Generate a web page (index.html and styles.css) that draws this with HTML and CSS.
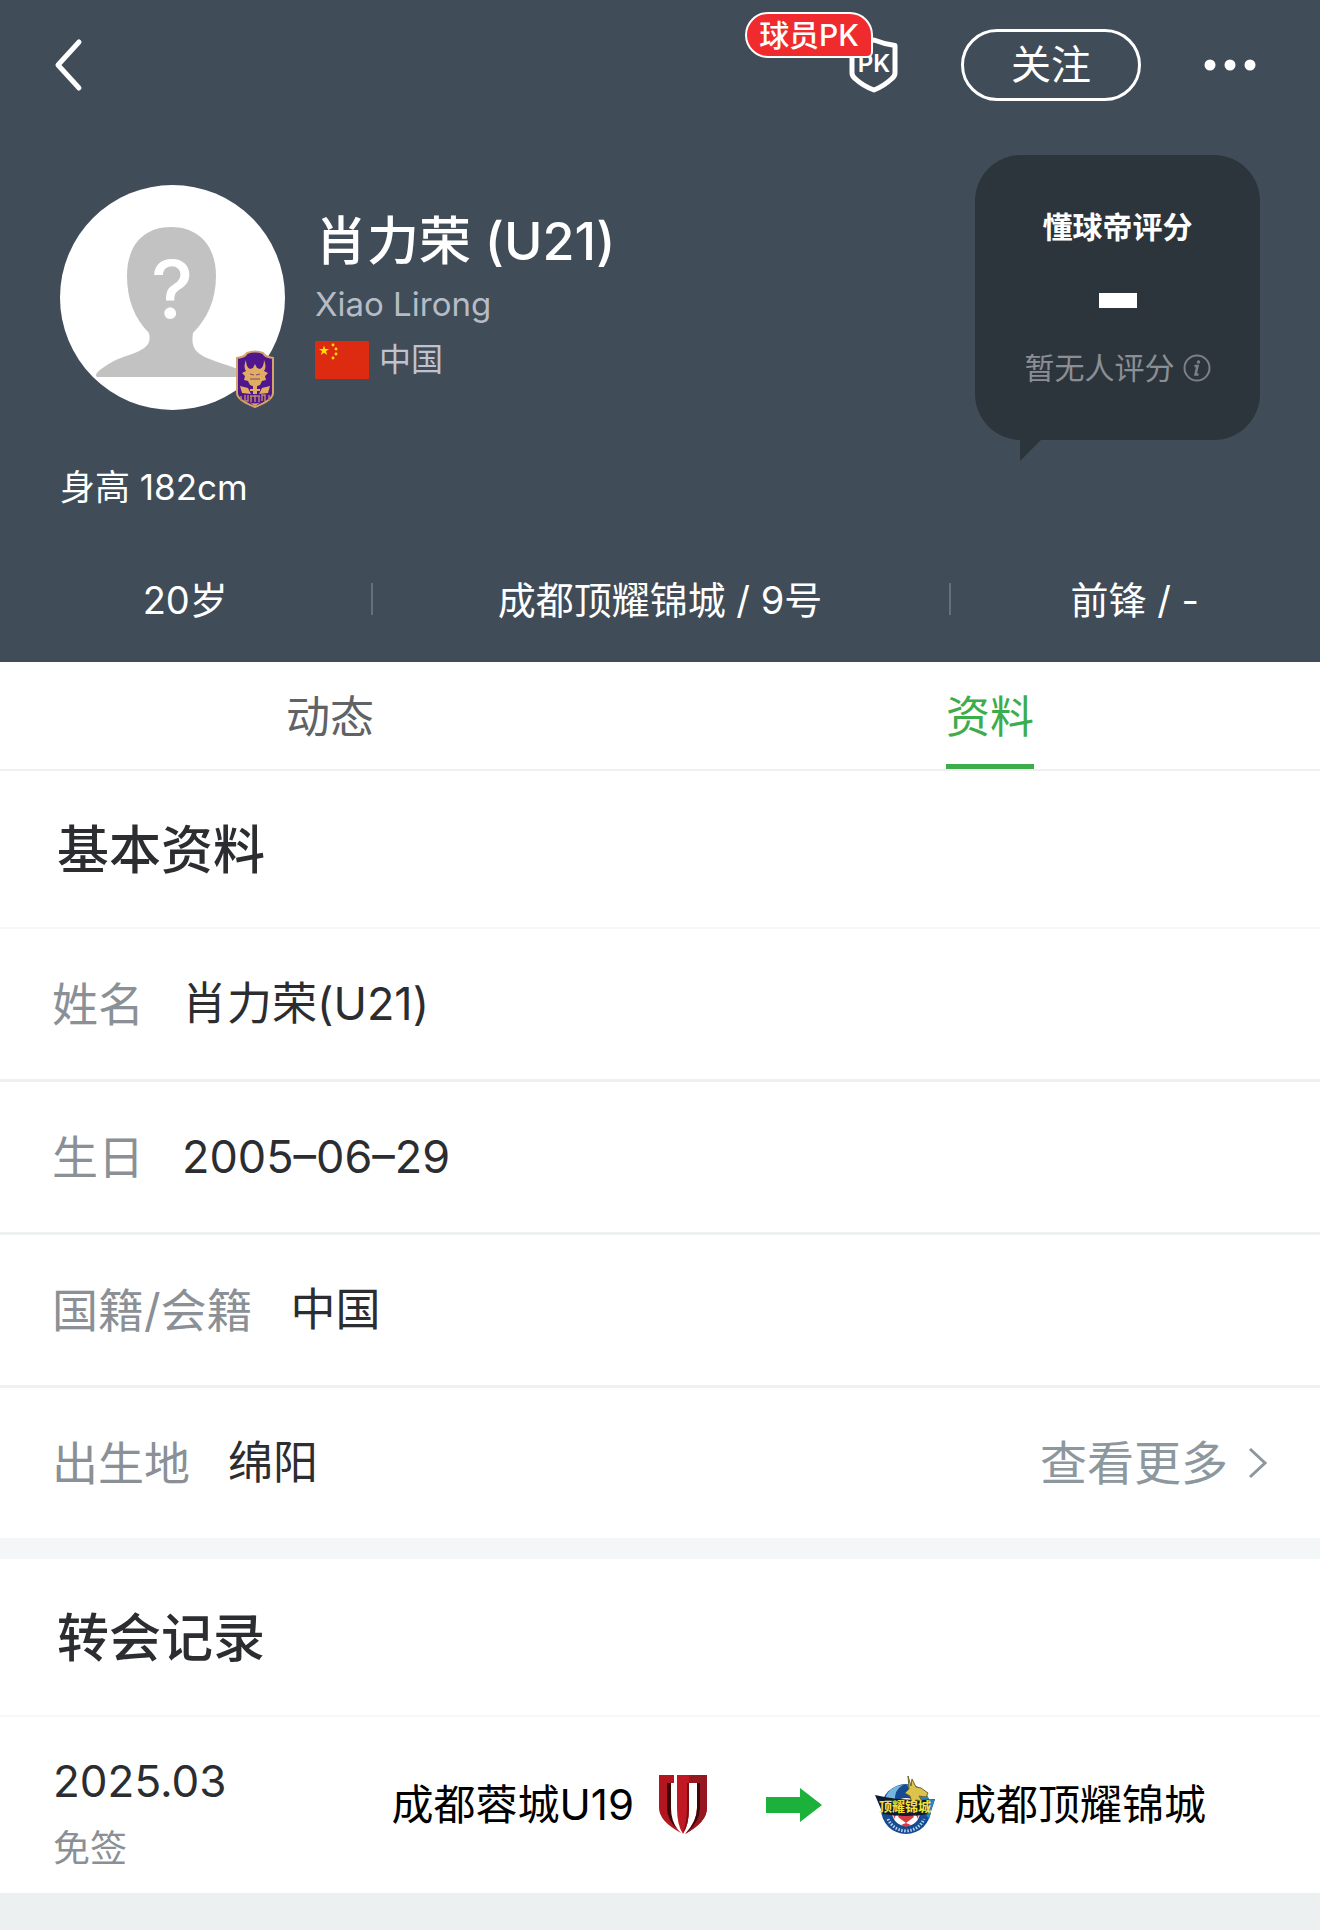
FILE: index.html
```html
<!DOCTYPE html>
<html lang="zh-CN">
<head>
    <meta charset="UTF-8">
    <meta name="viewport" content="width=device-width, initial-scale=1.0">
    <title>肖力荣(U21)</title>
    <link rel="stylesheet" href="styles.css">
</head>
<body>
    <header class="player-header">
        <div class="top-bar">
            <button class="icon-button" type="button" aria-label="返回">
                <svg width="32" height="56" viewBox="0 0 32 56" fill="none" stroke="#fff" stroke-width="5" stroke-linecap="round" stroke-linejoin="round"><path d="M27 5 6 28l21 23"/></svg>
            </button>
            <div class="actions">
                <button class="icon-button pk-button" type="button" aria-label="球员PK">
                    <svg width="50" height="56" viewBox="0 0 50 56">
                        <path d="M4 8.500Q15 7 26 3q10 4 21 5.500V36q0 3-3 5.500Q36 49 26 53 15 49 7 41.500 4 39 4 36z" fill="none" stroke="#fff" stroke-width="5" stroke-linejoin="round"/>
                        <text x="26" y="35" text-anchor="middle" class="pk-text">PK</text>
                    </svg>
                    <span class="pk-badge">球员PK</span>
                </button>
                <button class="follow-button" type="button">关注</button>
                <button class="icon-button" type="button" aria-label="更多">
                    <svg width="52" height="12" viewBox="0 0 52 12" fill="#fff"><circle cx="6" cy="6" r="5.500"/><circle cx="26" cy="6" r="5.500"/><circle cx="46" cy="6" r="5.500"/></svg>
                </button>
            </div>
        </div>

        <div class="profile">
            <div class="avatar">
                <svg width="225" height="225" viewBox="0 0 225 225">
                    <circle cx="112.500" cy="112.500" r="112.500" fill="#fff"/>
                    <path d="M111 42c28 0 45 19 45 49 0 24-9 43-23 57-2 13 1 19 14 25 22 9 35 10 43 19H37c-3-2 1-6 7-10 13-9 21-10 33-15 11-5 14-9 12-19-14-14-22-33-22-57 0-30 16-49 44-49z" fill="#c2c2c2"/>
                    <text x="112" y="133" text-anchor="middle" class="avatar-mark">?</text>
                </svg>
                <!-- 俱乐部队徽 -->
                <svg class="avatar-club" width="38" height="58" viewBox="0 0 38 58">
                    <path d="M1 8q8-1 10-5 8-3 16 0 2 4 10 5v35q0 7-18 14Q1 50 1 43z" fill="#4f168d" stroke="#d6a36b" stroke-width="2"/>
                    <g fill="#e0ad62">
                        <path d="M10 10q0 7 4 9l3-1 2-4 2 4 3 1q4-2 4-9 3 7 0 11l4 2-3 3 1 4-4 1-2 4-5 2-5-2-2-4-4-1 1-4-3-3 4-2q-3-4 0-11z"/>
                        <path d="M17 36h4v3h3v2h-3v3h-4v-3h-3v-2h3zM4 36l8 2 3 6-9-1zM34 36l-8 2-3 6 9-1zM13 52q6 3 12 0l-6 4z"/>
                    </g>
                    <path d="M14 24l4 1M24 24l-4 1M14 29h10" stroke="#7d4a62" stroke-width="1"/>
                    <path d="M5 46v5M9 45v6h3v-6M15 46v6M19 45v7M23 46v6M26 51v-6h3v6M33 45v6M14 46h10" fill="none" stroke="#b8876b" stroke-width="1.500"/>
                </svg>
            </div>
            <div class="identity">
                <h1>肖力荣 (U21)</h1>
                <p class="latin-name">Xiao Lirong</p>
                <p class="nation">
                    <svg width="54" height="38" viewBox="0 0 54 38">
                        <path d="M0 0h54v38H0z" fill="#dd2b12"/>
                        <g fill="#ffde00">
                            <path d="M9 4.500l1.200 3.500H14l-3 2.300 1.200 3.700L9 11.800 5.800 14 7 10.300 4 8h3.800z"/>
                            <circle cx="18" cy="4" r="1.400"/><circle cx="21" cy="8" r="1.400"/><circle cx="21" cy="13" r="1.400"/><circle cx="18" cy="17" r="1.400"/>
                        </g>
                    </svg>
                    中国
                </p>
            </div>
            <div class="rating">
                <h2>懂球帝评分</h2>
                <span class="rating-dash"></span>
                <p>
                    暂无人评分
                    <svg width="28" height="28" viewBox="0 0 28 28" fill="none" stroke="#7b8086" stroke-width="2"><circle cx="14" cy="14" r="12.500"/><path d="M11.500 12h3l-2 8.500h3" stroke-width="2.500"/><circle cx="15.500" cy="8" r="1" stroke-width="1.500"/></svg>
                </p>
            </div>
        </div>

        <p class="height">身高 182cm</p>

        <ul class="stats">
            <li>20岁</li>
            <li>成都顶耀锦城 / 9号</li>
            <li>前锋 / -</li>
        </ul>
    </header>

    <nav class="tabs">
        <a href="#news">动态</a>
        <a href="#info" class="active">资料</a>
    </nav>

    <main>
        <section id="info">
            <h2 class="section-title">基本资料</h2>
            <dl class="info-list">
                <div class="info-row"><dt>姓名</dt><dd>肖力荣(U21)</dd></div>
                <div class="info-row"><dt>生日</dt><dd>2005–06–29</dd></div>
                <div class="info-row"><dt>国籍/会籍</dt><dd>中国</dd></div>
                <div class="info-row">
                    <dt>出生地</dt>
                    <dd>绵阳</dd>
                    <dd class="more"><a href="#more">查看更多
                        <svg width="20" height="32" viewBox="0 0 20 32" fill="none" stroke="#8d979e" stroke-width="3"><path d="M2 2l15 14L2 30"/></svg>
                    </a></dd>
                </div>
            </dl>
        </section>

        <section class="transfers">
            <h2 class="section-title">转会记录</h2>
            <div class="transfer">
                <div class="transfer-date">
                    <time datetime="2025-03">2025.03</time>
                    <span>免签</span>
                </div>
                <div class="route">
                    <span>成都蓉城U19</span>
                    <svg width="62" height="62" viewBox="0 0 62 62">
                        <path d="M7 1h15v8h-5v25q1 15 12 25Q7 47 7 34z" fill="#b3161f"/>
                        <path d="M15 9h4v25q0 13 7 22-11-10-11-22z" fill="#3d0709"/>
                        <path d="M25 1h30v33q0 14-22 26 12-13 12-26V9h-8v25q0 17-6 26-6-9-6-26z" fill="#c01923"/>
                        <path d="M37 1h18v33q0 14-22 26 15-14 15-26V9H37z" fill="#951821"/>
                        <path d="M45 9h3v25q0 14-14 25 11-12 11-25z" fill="#3d0709"/>
                        <path d="M35 9h2v25q0 17-6 25 4-12 4-25z" fill="#7c0e16"/>
                    </svg>
                    <svg class="arrow" width="56" height="34" viewBox="0 0 56 34"><path d="M0 9h34V0l22 17-22 17v-9H0z" fill="#1cb13a"/></svg>
                    <svg width="62" height="62" viewBox="0 0 62 62">
                        <circle cx="32" cy="35" r="25" fill="#164b91"/>
                        <path d="M32 10a25 25 0 0 1 23 35L44 30z" fill="#2587c5"/>
                        <path d="M11 25q4-13 18-14-9 5-8 16z" fill="#75b6df"/>
                        <circle cx="32" cy="38" r="14" fill="#fff"/>
                        <path d="M27 38h10l3 5-8 6-8-6zM19 36l4 3-3 6zM45 36l-4 3 3 6zM27 51l5-2 5 2-5 2z" fill="#d93b43"/>
                        <path d="M14 45q5 11 18 12 13-1 18-12" fill="none" stroke="#b9d3ec" stroke-width="3" stroke-dasharray="1.500 1.500"/>
                        <path d="M1 21q30 7 60 4l-5 15q-25 4-47 0z" fill="#101a35"/>
                        <path d="M56 26l5-1-5 15-3 1z" fill="#2587c5"/>
                        <path d="M34 2l3 10 1-7 4 8 5 1 7 5-2 4-7-1 3 5-6-1-4 3-2-7-5-3 4-4z" fill="#ddc34b" stroke="#6f642b"/>
                        <text x="31" y="37" text-anchor="middle" class="crest-text">顶耀锦城</text>
                    </svg>
                    <span>成都顶耀锦城</span>
                </div>
            </div>
        </section>
    </main>
</body>
</html>
```
FILE: styles.css
```css
* {
    box-sizing: border-box;
}

body {
    margin: 0;
    font-family: Inter, "Noto Sans CJK SC", sans-serif;
    background-color: #ecf0f1;
    color: #2c2d30;
}

h1, h2, p, ul, dl, dd {
    margin: 0;
    padding: 0;
}

a {
    color: inherit;
    text-decoration: none;
}

svg {
    display: block;
    flex: none;
}

button {
    font-family: inherit;
    color: #fff;
    background: none;
    cursor: pointer;
}

/* header */
.player-header {
    background-color: #404c58;
    color: #fff;
    padding-bottom: 36px;
}

.top-bar {
    display: flex;
    justify-content: space-between;
    align-items: center;
    height: 130px;
    padding: 0 64px 0 52px;
}

.actions {
    display: flex;
    align-items: center;
    gap: 63px;
}

.icon-button {
    padding: 0;
    border: none;
}

.pk-button {
    position: relative;
}

.pk-text {
    font-size: 24px;
    font-weight: 600;
    fill: #fff;
}

.pk-badge {
    position: absolute;
    right: 25px;
    bottom: 35px;
    padding: 0 12px;
    border: 2px solid #fff;
    border-radius: 23px 23px 6px 23px;
    background-color: #ef2b2d;
    font-size: 30px;
    line-height: 42px;
    font-weight: 500;
    white-space: nowrap;
}

.follow-button {
    width: 180px;
    height: 72px;
    padding: 0;
    border: 3px solid #fff;
    border-radius: 36px;
    font-size: 40px;
    line-height: 66px;
}

.profile {
    display: flex;
    align-items: center;
    padding: 0 60px;
    margin-top: 25px;
}

.avatar {
    position: relative;
    margin-right: 30px;
}

.avatar-mark {
    font-size: 80px;
    font-weight: 500;
    fill: #fff;
}

.avatar-club {
    position: absolute;
    right: 11px;
    bottom: 2px;
}

.identity {
    flex: 1;
}

.identity h1 {
    font-size: 52px;
    line-height: 74px;
    font-weight: 500;
}

.latin-name {
    font-size: 33px;
    line-height: 50px;
    color: #b6bcc6;
}

.nation {
    display: flex;
    align-items: center;
    gap: 10px;
    font-size: 32px;
    line-height: 62px;
    color: #bfc3cf;
}

.rating {
    position: relative;
    display: flex;
    flex-direction: column;
    align-items: center;
    width: 285px;
    height: 285px;
    padding-top: 50px;
    border-radius: 46px;
    background-color: #2d353c;
}

.rating::after {
    content: "";
    position: absolute;
    left: 45px;
    top: 100%;
    border-top: 21px solid #2d353c;
    border-right: 21px solid transparent;
}

.rating h2 {
    font-size: 30px;
    line-height: 44px;
    font-weight: 700;
}

.rating-dash {
    width: 38px;
    height: 15px;
    margin: 44px 0 38px;
    background-color: #fff;
}

.rating p {
    display: flex;
    align-items: center;
    gap: 8px;
    font-size: 30px;
    line-height: 44px;
    color: #8b8e94;
}

.height {
    padding: 0 60px;
    margin-top: 20px;
    font-size: 35px;
    line-height: 54px;
}

.stats {
    display: grid;
    grid-template-columns: 16fr 25fr 16fr;
    margin-top: 60px;
    list-style: none;
    font-size: 38px;
    line-height: 52px;
    text-align: center;
}

.stats li {
    position: relative;
}

.stats li + li::before {
    content: "";
    position: absolute;
    left: 0;
    top: 9px;
    width: 2px;
    height: 32px;
    background-color: #66707a;
}

/* tabs */
.tabs {
    display: flex;
    justify-content: space-around;
    background-color: #fff;
    border-bottom: 2px solid #eff0f1;
    font-size: 44px;
    line-height: 110px;
    color: #606266;
}

.tabs a {
    height: 107px;
}

.tabs .active {
    color: #3dac4b;
    box-shadow: inset 0 -5px #3dac4b;
}

/* sections */
section {
    background-color: #fff;
}

.section-title {
    height: 158px;
    padding: 0 57px;
    border-bottom: 2px solid #f5f7f8;
    font-size: 52px;
    line-height: 160px;
    font-weight: 500;
}

.info-row {
    display: flex;
    align-items: center;
    gap: 38px;
    padding: 0 52px;
    font-size: 46px;
    line-height: 150px;
    border-bottom: 3px solid #eef1f1;
}

.info-row:last-child {
    border-bottom: none;
}

.info-row dt {
    color: #8a9095;
}

.info-row dd {
    font-size: 45px;
}

.info-row .more {
    margin-left: auto;
    font-size: 47px;
    color: #8d979e;
}

.more a {
    display: flex;
    align-items: center;
    gap: 20px;
}

.transfers {
    border-top: 21px solid #f3f7f8;
}

.transfer {
    display: flex;
    justify-content: space-between;
    align-items: center;
    height: 176px;
    padding: 0 114px 0 53px;
}

.transfer-date {
    display: flex;
    flex-direction: column;
    padding-top: 20px;
    font-size: 44px;
    line-height: 68px;
}

.transfer-date span {
    font-size: 37px;
    color: #8a9095;
}

.route {
    display: flex;
    align-items: center;
    gap: 18px;
    font-size: 42px;
    line-height: 60px;
    color: #000;
}

.arrow {
    margin: 0 34px;
}

.crest-text {
    font-size: 13px;
    font-weight: 700;
    fill: #f4e232;
}
```
